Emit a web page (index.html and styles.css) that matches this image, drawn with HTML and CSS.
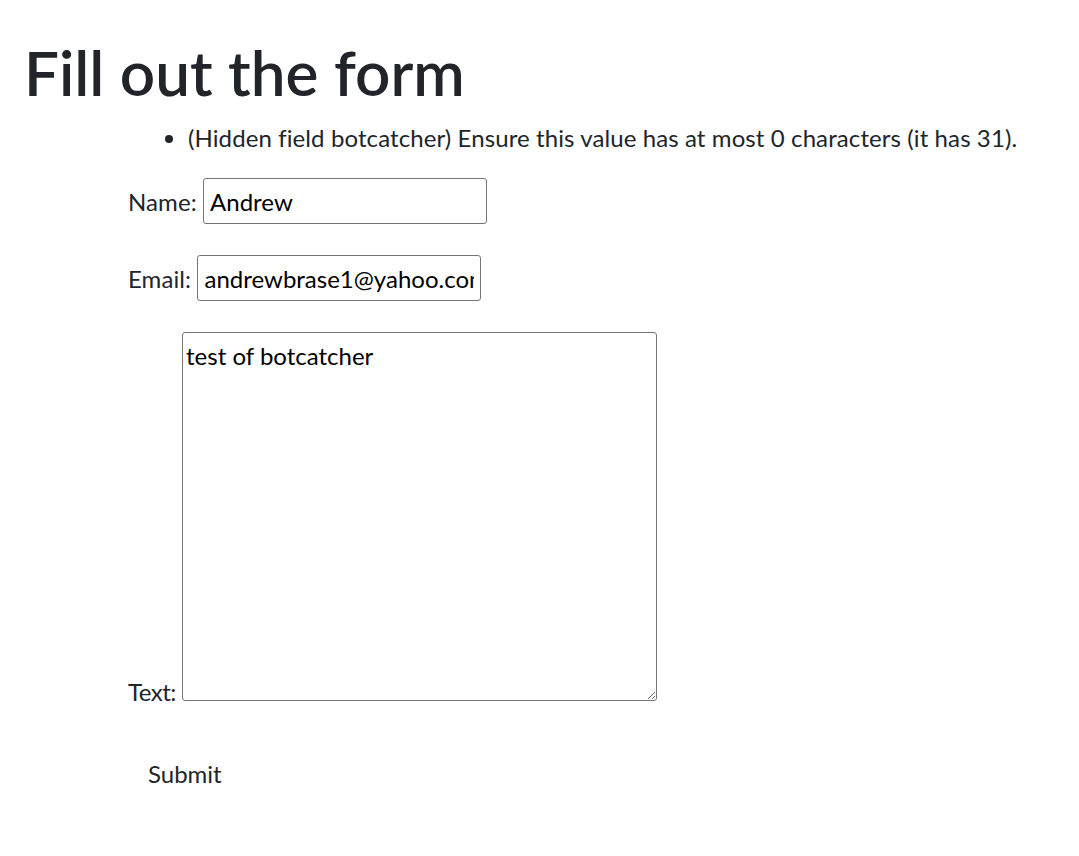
FILE: index.html
```html
<!DOCTYPE html>
<html>
<head>
<meta charset="utf-8">
<title>Fill out the form</title>
<link rel="stylesheet" href="styles.css">
</head>
<body>
<div class="page">
  <h1 class="title">Fill out the form</h1>
  <form class="form">
    <ul class="errors">
      <li>(Hidden field botcatcher) Ensure this value has at most 0 characters (it has 31).</li>
    </ul>
    <p class="row"><label class="lbl" for="name">Name:</label> <input class="field name" id="name" type="text" value="Andrew"></p>
    <p class="row"><label class="lbl" for="email">Email:</label> <input class="field" id="email" type="text" value="andrewbrase1@yahoo.com"></p>
    <p class="row"><label class="lbl lbl-text" for="text">Text:</label> <textarea class="area" id="text">test of botcatcher</textarea></p>
    <p class="row last"><button class="submit" type="button">Submit</button></p>
  </form>
</div>
</body>
</html>
```

FILE: styles.css
```css
html, body {
  margin: 0;
  padding: 0;
  background: #ffffff;
}
body {
  font-family: "Lato", "Noto Sans", sans-serif;
  color: #212529;
  font-size: 24px;
  line-height: 1.5;
  letter-spacing: 0.1px;
}
.page {
  padding: 0 24px;
}
.title {
  font-size: 62px;
  font-weight: 600;
  line-height: 1.2;
  letter-spacing: 0;
  margin: 35px 0 11px;
}
.form {
  padding-left: 104px;
}
.errors {
  margin: 0 0 22px;
  padding-left: 60px;
}
.row {
  margin: 0 0 31px;
}
.lbl {
  color: #212529;
}
.lbl-text {
  letter-spacing: -0.5px;
}
.field {
  font-family: inherit;
  font-size: 24px;
  color: #000;
  width: 284px;
  height: 46px;
  box-sizing: border-box;
  padding: 1px 6px;
  border: 1px solid #767676;
  border-radius: 3px;
  margin: 0;
}
.area {
  font-family: inherit;
  font-size: 24px;
  line-height: 1.2;
  color: #000;
  width: 475px;
  height: 369px;
  box-sizing: border-box;
  padding: 9px 3px;
  border: 1px solid #767676;
  border-radius: 3px;
  margin: 0;
}
.last {
  margin-top: 45px;
}
.submit {
  font-family: inherit;
  font-size: 24px;
  color: #212529;
  background: none;
  border: none;
  padding: 4px 20px;
  margin: 0;
}
```
